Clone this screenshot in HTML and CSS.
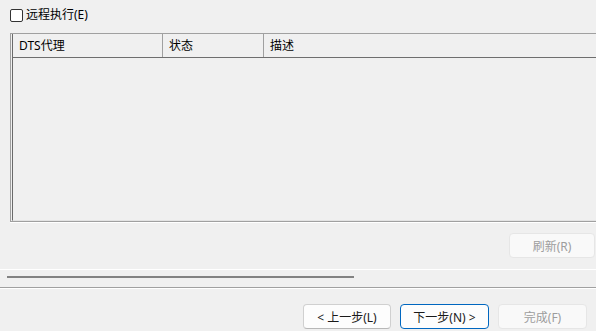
FILE: index.html
```html
<!DOCTYPE html>
<html lang="zh-CN">
<head>
    <meta charset="UTF-8">
    <title>DTS 代理</title>
    <link rel="stylesheet" href="styles.css">
</head>
<body>
    <div class="page">
        <!-- remote option -->
        <label class="check-row">
            <span class="check-box"></span>
            <span>远程执行(E)</span>
        </label>

        <!-- agent list -->
        <div class="list">
            <div class="list-inner">
                <div class="list-head">
                    <div class="col col-agent">DTS代理</div>
                    <div class="col col-state">状态</div>
                    <div class="col col-desc">描述</div>
                </div>
                <div class="list-body"></div>
            </div>
        </div>

        <div class="refresh-row">
            <button class="btn disabled">刷新(R)</button>
        </div>

        <div class="divider">
            <div class="progress"></div>
        </div>

        <div class="footer">
            <button class="btn">&lt; 上一步(L)</button>
            <button class="btn primary">下一步(N) &gt;</button>
            <button class="btn disabled">完成(F)</button>
        </div>
    </div>
</body>
</html>
```

FILE: styles.css
```css
html, body {
    margin: 0;
    background: #f0f0f0;
    overflow: hidden;
}
body {
    font-family: "Noto Sans", "Noto Sans CJK SC", sans-serif;
    font-size: 12px;
    color: #000;
}
.page {
    width: 596px;
    height: 331px;
    display: flex;
    flex-direction: column;
}
.check-row {
    display: flex;
    align-items: center;
    gap: 3px;
    height: 14px;
    margin: 8px 0 0 10px;
    line-height: 14px;
}
.check-box {
    width: 11px;
    height: 11px;
    border: 1px solid #333;
    border-radius: 2px;
    background: #fff;
}
.list {
    margin: 11px -20px 0 10px;
    height: 187px;
    border: 1px solid #a0a0a0;
    border-right: none;
    border-bottom-color: #a0a0a0;
    box-shadow: 0 1px 0 #fff;
    padding-left: 1px;
}
.list-inner {
    height: 100%;
    border-left: 1px solid #6a6a6a;
    border-bottom: 1px solid #e3e3e3;
    box-sizing: border-box;
    display: flex;
    flex-direction: column;
}
.list-head {
    display: flex;
    height: 23px;
    border-bottom: 1px solid #6e6e6e;
}
.col {
    padding-left: 6px;
    line-height: 23px;
    border-right: 1px solid #a0a0a0;
    box-sizing: border-box;
}
.col-agent {
    width: 150px;
}
.col-state {
    width: 101px;
}
.col-desc {
    flex: 1;
    border-right: none;
}
.list-body {
    flex: 1;
}
.refresh-row {
    display: flex;
    justify-content: flex-end;
    margin-top: 11px;
    padding-right: 1px;
}
.btn {
    width: 88px;
    height: 25px;
    box-sizing: border-box;
    border: 1px solid #d0d0d0;
    border-bottom-color: #b8b8b8;
    border-radius: 4px;
    background: #fdfdfd;
    font-family: "Noto Sans", "Noto Sans CJK SC", sans-serif;
    font-size: 12px;
    color: #1a1a1a;
    padding: 0;
}
.btn.primary {
    border: 1px solid #0067c0;
    width: 89px;
}
.btn.disabled {
    background: #f9f9f9;
    border-color: #e6e6e6;
    color: #9d9d9d;
    width: 86px;
}
.divider {
    margin-top: 11px;
    height: 17px;
    border-top: 1px solid #fff;
    border-bottom: 1px solid #a0a0a0;
    box-shadow: 0 1px 0 #fff;
}
.progress {
    margin: 6px 0 0 7px;
    width: 347px;
    height: 2px;
    background: #828282;
}
.footer {
    display: flex;
    gap: 9px;
    justify-content: flex-end;
    margin-top: 16px;
    padding-right: 9px;
}
.footer .btn.disabled {
    width: 89px;
}
```
